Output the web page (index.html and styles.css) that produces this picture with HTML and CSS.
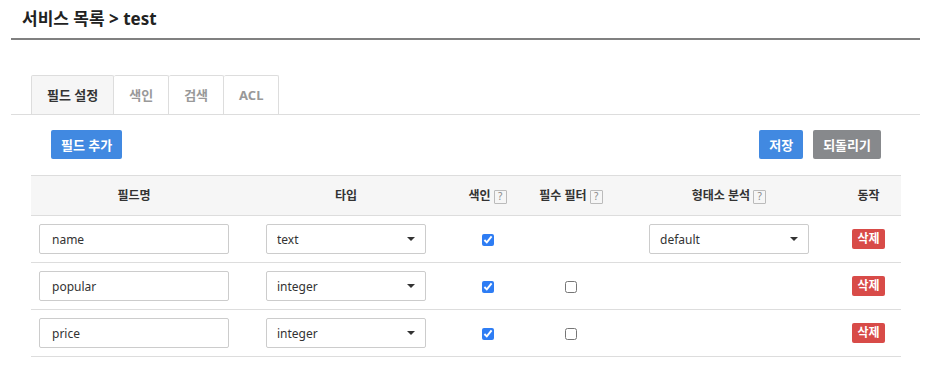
FILE: index.html
```html
<!DOCTYPE html>
<html lang="ko">
<head>
    <meta charset="UTF-8">
    <meta name="viewport" content="width=device-width, initial-scale=1.0">
    <title>서비스 목록 - test</title>
    <link rel="stylesheet" href="styles.css">
</head>
<body>
    <div class="page">
        <h1 class="page-title">서비스 목록 &gt; test</h1>

        <ul class="tabs">
            <li class="tab active">필드 설정</li>
            <li class="tab">색인</li>
            <li class="tab">검색</li>
            <li class="tab">ACL</li>
        </ul>

        <div class="content">
            <div class="toolbar">
                <button class="btn btn-primary">필드 추가</button>
                <div class="toolbar-right">
                    <button class="btn btn-primary">저장</button>
                    <button class="btn btn-gray">되돌리기</button>
                </div>
            </div>

            <table class="field-table">
                <colgroup>
                    <col style="width: 206px">
                    <col style="width: 218px">
                    <col style="width: 65px">
                    <col style="width: 102px">
                    <col style="width: 214px">
                    <col style="width: 65px">
                </colgroup>
                <thead>
                    <tr>
                        <th>필드명</th>
                        <th>타입</th>
                        <th>색인 <span class="help">?</span></th>
                        <th>필수 필터 <span class="help">?</span></th>
                        <th>형태소 분석 <span class="help">?</span></th>
                        <th>동작</th>
                    </tr>
                </thead>
                <tbody>
                    <tr>
                        <td><input class="text-input" type="text" value="name"></td>
                        <td><span class="select"><select><option>text</option></select></span></td>
                        <td><input type="checkbox" checked></td>
                        <td></td>
                        <td><span class="select"><select><option>default</option></select></span></td>
                        <td><button class="btn-delete">삭제</button></td>
                    </tr>
                    <tr>
                        <td><input class="text-input" type="text" value="popular"></td>
                        <td><span class="select"><select><option>integer</option></select></span></td>
                        <td><input type="checkbox" checked></td>
                        <td><input type="checkbox"></td>
                        <td></td>
                        <td><button class="btn-delete">삭제</button></td>
                    </tr>
                    <tr>
                        <td><input class="text-input" type="text" value="price"></td>
                        <td><span class="select"><select><option>integer</option></select></span></td>
                        <td><input type="checkbox" checked></td>
                        <td><input type="checkbox"></td>
                        <td></td>
                        <td><button class="btn-delete">삭제</button></td>
                    </tr>
                </tbody>
            </table>
        </div>
    </div>
</body>
</html>
```

FILE: styles.css
```css
body {
    margin: 0;
    font-family: 'Noto Sans', 'Noto Sans CJK KR', sans-serif;
    color: #333;
    background: #fff;
}

.page {
    margin: 0 20px 0 11px;
}

.page-title {
    margin: 0;
    padding: 6px 11px 6px;
    font-size: 17px;
    line-height: 26px;
    font-weight: 700;
    color: #222;
    border-bottom: 2px solid #808080;
}

.tabs {
    list-style: none;
    margin: 35px 0 0;
    padding: 0 20px;
    display: flex;
    border-bottom: 1px solid #ddd;
}

.tab {
    height: 38px;
    line-height: 38px;
    padding: 0 15px;
    border: 1px solid #ddd;
    border-bottom: none;
    border-left-width: 0;
    border-radius: 2px 2px 0 0;
    font-size: 13px;
    font-weight: 700;
    color: #999;
}

.tab:first-child {
    border-left-width: 1px;
}

.tab.active {
    background: #f6f6f6;
    color: #333;
}

.content {
    padding: 15px 19px 0 20px;
}

.toolbar {
    display: flex;
    justify-content: space-between;
    padding: 0 20px;
    margin-bottom: 16px;
}

.toolbar-right {
    display: flex;
    gap: 10px;
}

.btn {
    height: 29px;
    padding: 0 10px;
    border: none;
    border-radius: 2px;
    font-family: inherit;
    font-size: 13px;
    font-weight: 700;
    color: #fff;
}

.btn-primary {
    background: #4189e1;
}

.btn-gray {
    background: #87898c;
}

.field-table {
    width: 870px;
    table-layout: fixed;
    border-collapse: collapse;
    font-size: 12px;
}

.field-table th {
    padding: 10px 8px;
    line-height: 19px;
    background: #f6f6f6;
    border-top: 1px solid #ddd;
    border-bottom: 1px solid #ddd;
    font-weight: 700;
    color: #333;
    text-align: center;
}

.field-table td {
    padding: 8px;
    border-bottom: 1px solid #ddd;
    text-align: center;
    vertical-align: middle;
}

.help {
    display: inline-block;
    width: 11px;
    height: 12px;
    line-height: 11px;
    border: 1px solid #bbb;
    border-radius: 1px;
    font-size: 10px;
    font-weight: 400;
    color: #888;
    vertical-align: 0;
    text-align: center;
}

.text-input {
    display: block;
    box-sizing: border-box;
    width: 190px;
    height: 30px;
    padding: 0 12px;
    border: 1px solid #ccc;
    border-radius: 2px;
    font-family: inherit;
    font-size: 12px;
    color: #333;
}

.select {
    position: relative;
    display: inline-block;
    vertical-align: middle;
}

.select select {
    display: block;
    box-sizing: border-box;
    width: 160px;
    height: 30px;
    padding: 0 10px;
    border: 1px solid #ccc;
    border-radius: 2px;
    background: #fff;
    appearance: none;
    -webkit-appearance: none;
    font-family: inherit;
    font-size: 12px;
    color: #333;
    text-align: left;
}

.select::after {
    content: "";
    position: absolute;
    right: 11px;
    top: 13px;
    border-left: 4px solid transparent;
    border-right: 4px solid transparent;
    border-top: 4px solid #333;
}

input[type="checkbox"] {
    margin: 0;
    width: 12px;
    height: 12px;
    accent-color: #2e7df4;
    vertical-align: middle;
}

.btn-delete {
    height: 20px;
    padding: 0 5px;
    border: none;
    border-radius: 2px;
    background: #d84b48;
    font-family: inherit;
    font-size: 12px;
    font-weight: 700;
    color: #fff;
    line-height: 20px;
}
```
